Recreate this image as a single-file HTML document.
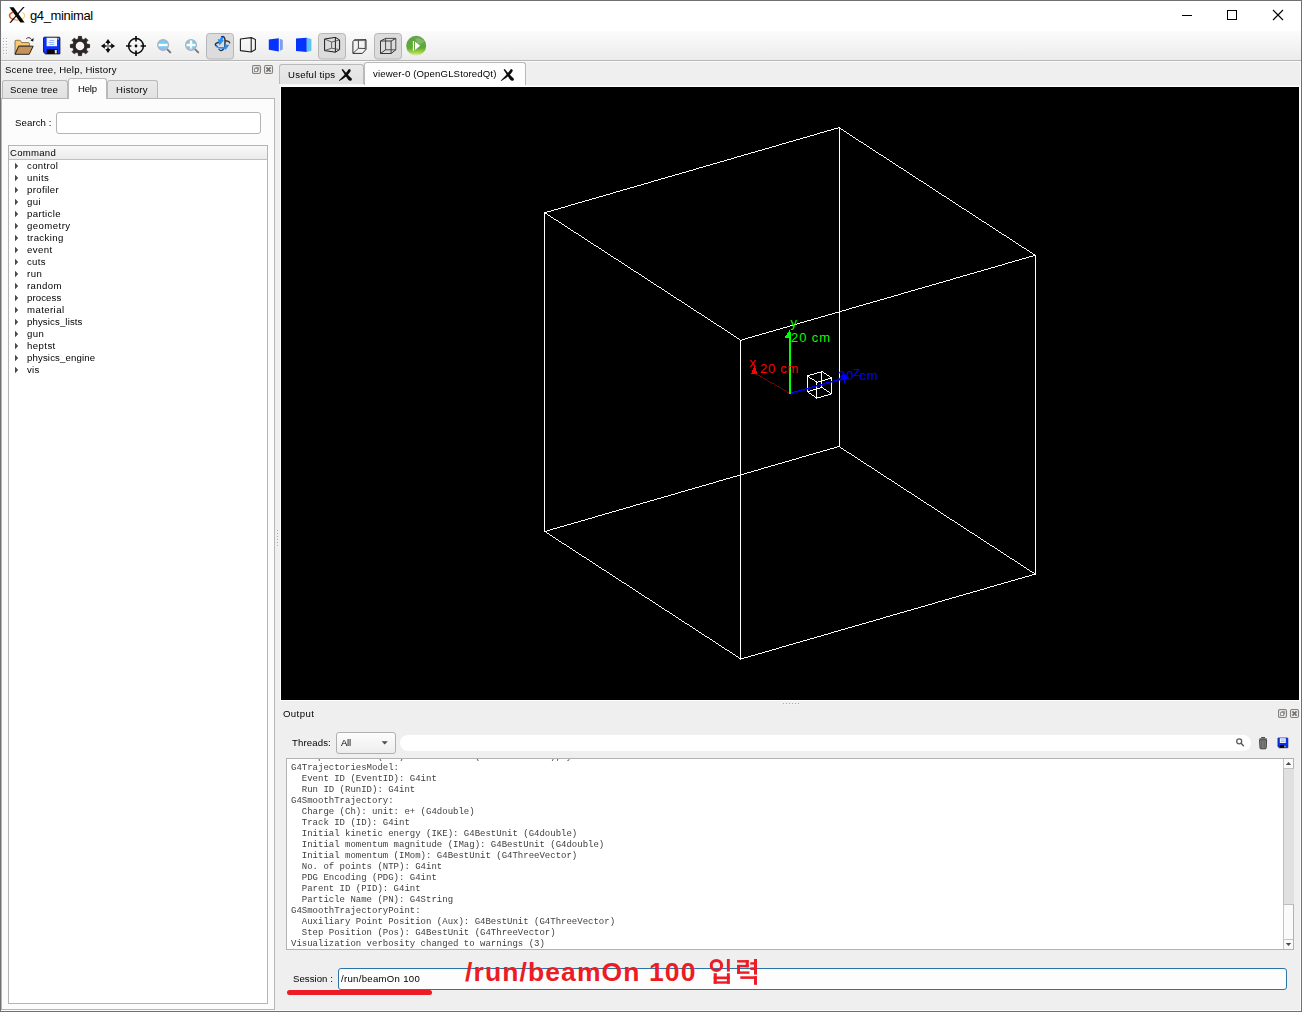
<!DOCTYPE html>
<html>
<head>
<meta charset="utf-8">
<title>g4_minimal</title>
<style>
*{box-sizing:border-box;margin:0;padding:0}
html,body{width:1302px;height:1012px;overflow:hidden;background:#efefef;font-family:"Liberation Sans",sans-serif;color:#1a1a1a}
.abs{position:absolute}
#win{position:absolute;left:0;top:0;width:1302px;height:1012px;background:#efefef;overflow:hidden}
#titlebar{left:1px;top:1px;width:1300px;height:30px;background:#fff}
#title{left:30px;top:8px;font-size:13px;line-height:16px;color:#000;white-space:nowrap;letter-spacing:-0.36px}
#toolbar{left:1px;top:31px;width:1300px;height:29px;background:linear-gradient(#fbfbfb,#ececec)}
#tbline{left:1px;top:60px;width:1300px;height:1px;background:#b6b6b6}
.t{position:absolute;white-space:nowrap;font-size:9.6px;line-height:13px;color:#000;will-change:opacity}
.tab{position:absolute;border:1px solid #b9b9b9;border-bottom:none;border-radius:3px 3px 0 0;background:linear-gradient(#e9e9e9,#e2e2e2)}
.tab.sel{background:#fbfbfb}
.pressed{position:absolute;border:1px solid #b4b4b4;border-radius:3px;background:#dcdcdc}
#viewer{left:281px;top:87px;width:1018px;height:613px;background:#000}
.mono{font-family:"Liberation Mono",monospace}
</style>
</head>
<body>
<div id="win">
<!-- TITLEBAR -->
<div id="titlebar" class="abs"></div>
<div id="title" class="abs">g4_minimal</div>
<!-- TOOLBAR -->
<div id="toolbar" class="abs"></div>
<div id="tbline" class="abs"></div>
<!-- TOOLBAR ICONS -->
<svg class="abs" style="left:0;top:31px" width="440" height="30" viewBox="0 31 440 30">
<!-- handle dots -->
<g shape-rendering="crispEdges"><g fill="#fdfdfd"><rect x="4" y="39" width="1" height="1"/><rect x="4" y="42" width="1" height="1"/><rect x="4" y="45" width="1" height="1"/><rect x="4" y="48" width="1" height="1"/><rect x="4" y="51" width="1" height="1"/><rect x="4" y="54" width="1" height="1"/><rect x="7" y="39" width="1" height="1"/><rect x="7" y="42" width="1" height="1"/><rect x="7" y="45" width="1" height="1"/><rect x="7" y="48" width="1" height="1"/><rect x="7" y="51" width="1" height="1"/><rect x="7" y="54" width="1" height="1"/></g><g fill="#b4b4b4"><rect x="3" y="38" width="1" height="1"/><rect x="3" y="41" width="1" height="1"/><rect x="3" y="44" width="1" height="1"/><rect x="3" y="47" width="1" height="1"/><rect x="3" y="50" width="1" height="1"/><rect x="3" y="53" width="1" height="1"/><rect x="6" y="38" width="1" height="1"/><rect x="6" y="41" width="1" height="1"/><rect x="6" y="44" width="1" height="1"/><rect x="6" y="47" width="1" height="1"/><rect x="6" y="50" width="1" height="1"/><rect x="6" y="53" width="1" height="1"/></g></g>
<!-- pressed buttons -->
<rect x="206.5" y="33.5" width="27" height="25.5" rx="3" fill="#dcdcdc" stroke="#b6b6b6"/>
<rect x="318.5" y="33.5" width="27" height="25.5" rx="3" fill="#dcdcdc" stroke="#b6b6b6"/>
<rect x="374.5" y="33.5" width="27" height="25.5" rx="3" fill="#dcdcdc" stroke="#b6b6b6"/>
<!-- folder -->
<path d="M15 41.2 Q15 40.3 16 40.3 L19.6 40.3 Q20.4 40.3 20.8 41 L21.6 42.6 L28.6 42.6 Q29.4 42.6 29.4 43.4 L29.4 46 L18.6 46 L15 53.8 Z" fill="#fbc96d" stroke="#5a4a30" stroke-width="0.7"/>
<path d="M18.8 46.2 L33.2 46.2 L29.2 54.3 L15 54.3 Z" fill="#c4935a" stroke="#2a2622" stroke-width="1" stroke-linejoin="round"/>
<path d="M26.2 38.8 Q29.2 36 31.6 39.6" fill="none" stroke="#222" stroke-width="0.9"/>
<path d="M33.6 38 L33.2 41.6 L30.4 40.4 Z" fill="#111"/>
<!-- floppy -->
<path d="M44.4 37.2 L59.2 37.2 Q59.9 37.2 59.9 37.9 L59.9 53.9 L45.4 53.9 L43.6 52.2 L43.6 38 Q43.6 37.2 44.4 37.2 Z" fill="#0a35ff" stroke="#10101e" stroke-width="0.9"/>
<rect x="46.6" y="37.8" width="10.4" height="8.4" fill="#f2f4fb"/>
<rect x="49.5" y="40" width="4.6" height="0.9" fill="#8fb0ff"/><rect x="48.6" y="42" width="5.6" height="0.9" fill="#8fb0ff"/><rect x="49.5" y="44" width="4.6" height="0.9" fill="#8fb0ff"/>
<rect x="46.8" y="49.2" width="10.8" height="4.8" fill="#050505"/>
<rect x="54.8" y="50" width="2" height="3.4" fill="#e8e8e8"/>
<rect x="57.6" y="38" width="1" height="1.6" fill="#dfe6ff"/>
<!-- gear -->
<path d="M78.32 38.90 L78.45 36.42 L81.55 36.42 L81.68 38.90 L83.84 39.79 L85.68 38.14 L87.86 40.32 L86.21 42.16 L87.10 44.32 L89.58 44.45 L89.58 47.55 L87.10 47.68 L86.21 49.84 L87.86 51.68 L85.68 53.86 L83.84 52.21 L81.68 53.10 L81.55 55.58 L78.45 55.58 L78.32 53.10 L76.16 52.21 L74.32 53.86 L72.14 51.68 L73.79 49.84 L72.90 47.68 L70.42 47.55 L70.42 44.45 L72.90 44.32 L73.79 42.16 L72.14 40.32 L74.32 38.14 L76.16 39.79Z" fill="#2a2522" stroke="#2a2522" stroke-width="0.9" stroke-linejoin="round"/>
<circle cx="80" cy="46" r="4.3" fill="#f4f4f4"/>
<!-- move -->
<g fill="#0a0a0a">
<path d="M108 38.9 L110.7 42.9 L105.3 42.9 Z"/><path d="M108 53.1 L110.7 49.1 L105.3 49.1 Z"/>
<path d="M100.9 46 L104.9 43.3 L104.9 48.7 Z"/><path d="M115.1 46 L111.1 43.3 L111.1 48.7 Z"/>
<path d="M108 42.9 L108 44.6 M108 49.1 L108 47.4 M104.9 46 L106.6 46 M111.1 46 L109.4 46" stroke="#0a0a0a" stroke-width="1.6"/>
<circle cx="108" cy="46" r="0.8"/>
</g>
<!-- crosshair -->
<circle cx="136" cy="46" r="7.4" fill="none" stroke="#0a0a0a" stroke-width="1.5"/>
<path d="M136 36 L136 41.4 M136 50.6 L136 56 M126 46 L131.4 46 M140.6 46 L146 46" stroke="#0a0a0a" stroke-width="1.7"/>
<circle cx="136" cy="46" r="1.4" fill="#0a0a0a"/>
<!-- zoom out -->
<path d="M167.3 49.4 L170.3 52.4" stroke="#777" stroke-width="2" stroke-linecap="round"/>
<circle cx="163.1" cy="45" r="5.4" fill="#74cdf5" stroke="#b2b2b2" stroke-width="1.3"/>
<rect x="158.6" y="43.8" width="9" height="2.4" fill="#fff"/>
<path d="M158.6 47.6 A5 5 0 0 0 167.6 47.6 Z" fill="#9db4ea" opacity="0.55"/>
<!-- zoom in -->
<path d="M195.2 49.4 L198.2 52.4" stroke="#777" stroke-width="2" stroke-linecap="round"/>
<circle cx="191" cy="45" r="5.4" fill="#74cdf5" stroke="#b2b2b2" stroke-width="1.3"/>
<rect x="186.5" y="43.8" width="9" height="2.4" fill="#fff"/><rect x="189.8" y="40.5" width="2.4" height="9" fill="#fff"/>
<path d="M186.5 47.6 A5 5 0 0 0 195.5 47.6 Z" fill="#9db4ea" opacity="0.45"/>
<!-- rotate -->
<g fill="none" stroke="#333" stroke-linecap="round">
<path d="M222.9 36.5 Q225.4 37.2 225 42.5 L224.7 46.4" stroke-width="1.5"/>
<path d="M224.4 47.4 Q223 50.7 220.8 50.6 Q219.5 50.4 219 49.3" stroke-width="1.2"/>
<path d="M219.2 42.3 Q215.3 43 215.3 44.7 Q215.5 45.9 217 46.3" stroke-width="1.4"/>
<path d="M225.6 40.7 Q229.7 41.3 229.6 42.9" stroke-width="1.4"/>
</g>
<path d="M221.4 36.2 L223.7 36.5 L222.5 40 L223.9 40.2 L219.5 45.4 L217.7 39.1 L219.7 39.6 Z" fill="#1e90ff"/>
<path d="M221.4 36.1 L223.8 36.4 L223.5 37.2 L221.2 36.9 Z" fill="#00108f"/>
<path d="M215.8 45.9 Q220 47.6 224.7 46.9 L224.3 44.2 L229.2 45 L225.4 50.2 L225.1 48.5 Q219.6 49.4 215.8 46.9 Z" fill="#1e90ff"/>
<!-- perspective hollow -->
<path d="M240.4 39 L251.2 37.6 L255.4 39.6 L255.4 49.6 L251.2 52 L240.4 50.6 Z M251.2 37.6 L251.2 52" fill="none" stroke="#1e1e1e" stroke-width="1.1" stroke-linejoin="round"/>
<!-- solid blue 1 -->
<path d="M268.8 39.4 L278.8 38.2 L278.8 51.4 L268.8 49.8 Z" fill="#0433ff"/>
<path d="M279.8 38.8 L282.8 40 L282.8 49.6 L279.8 50.8 Z" fill="#7f9ee9"/>
<!-- solid blue 2 -->
<path d="M296 38.6 L306.8 37.8 L306.8 52 L296 51 Z" fill="#0433ff"/>
<path d="M306.8 37.8 L311.4 39 L311.4 50.8 L306.8 52 Z" fill="#5cc3f2"/>
<!-- wire perspective (pressed) -->
<g fill="none" stroke="#1c1c1c" stroke-width="1" stroke-linejoin="round">
<path d="M324.6 39 L335.4 37.4 L339.6 40 L339.6 49.6 L335.4 52.2 L324.6 50.6 Z"/>
<path d="M335.4 37.4 L335.4 52.2"/>
<path d="M331.6 42 L331.6 48.2 M324.6 39 L331.6 42 L339.6 40 M324.6 50.6 L331.6 48.2 L339.6 49.6" stroke="#444" stroke-width="0.8"/>
</g>
<!-- cube hidden-line -->
<g fill="none" stroke="#2e2e2e" stroke-width="1" stroke-linejoin="round">
<path d="M354 40.3 L366 40.3" stroke="#8a8a8a" stroke-width="1.6"/>
<path d="M365.2 40.5 L365.2 49.5" stroke="#9a9a9a" stroke-width="1.4"/>
<path d="M352.9 41.6 L354.4 39.9 L366 39.7 L366 49.4 L362.4 53.4 L352.9 53.4 Z"/>
<path d="M358.4 40.5 L358.4 48.3 L365 48.5 M358.4 48.3 L353 53.3" stroke="#333" stroke-width="0.9"/>
</g>
<!-- wire cube (pressed) -->
<g fill="none" stroke="#383838" stroke-width="1" stroke-linejoin="round">
<rect x="380.5" y="41" width="10.6" height="12.5"/>
<rect x="385.6" y="38.4" width="10.2" height="11.4" stroke="#4a4a4a"/>
<path d="M380.5 41 L385.6 38.4 M391.1 41 L395.8 38.4 M380.5 53.5 L385.6 49.8 M391.1 53.5 L395.8 49.8"/>
</g>
<!-- play -->
<defs><linearGradient id="pg" x1="0" y1="0" x2="0" y2="1"><stop offset="0" stop-color="#64a34a"/><stop offset="0.6" stop-color="#5cab34"/><stop offset="0.82" stop-color="#a6cf4a"/><stop offset="1" stop-color="#e3efc0"/></linearGradient></defs>
<circle cx="416.2" cy="45.8" r="10" fill="url(#pg)"/>
<path d="M415 38.5 Q420 36.5 424.6 41.6 Q421.5 45 418 43.6 Z" fill="#fff" opacity="0.2"/>
<rect x="412.9" y="41" width="1.1" height="9.6" fill="#fff"/>
<path d="M415 41.6 L420.2 45.8 L415 50 Z" fill="#fff"/>
</svg>
<!-- title icon -->
<svg class="abs" style="left:8px;top:6px" width="19" height="19" viewBox="8 6 19 19">
<path d="M12.9 12.1 Q9.2 13.6 9.5 16 Q9.8 18.2 12.9 19.5" fill="none" stroke="#e9531b" stroke-width="1.5"/>
<path d="M12.9 19.5 Q16.8 20.9 21.4 19.3" fill="none" stroke="#e38b3c" stroke-width="1"/>
<path d="M22.3 12.6 Q25 14 24.7 16 Q24.4 18 21.4 19.3" fill="none" stroke="#f7cd85" stroke-width="1.1"/>
<path d="M9.4 7.3 L13.6 7.3 L24.6 22.6 L20.4 22.6 Z" fill="#050505"/>
<path d="M23 7.1 L24.6 7.1 L11 22.8 L9.4 22.8 Z" fill="#0a0a0a"/>
</svg>
<!-- window controls -->
<svg class="abs" style="left:1175px;top:5px" width="115" height="20" viewBox="1175 5 115 20">
<path d="M1182 15.5 L1192 15.5" stroke="#000" stroke-width="1"/>
<rect x="1227.5" y="10.5" width="9" height="9" fill="none" stroke="#000" stroke-width="1"/>
<path d="M1273 10 L1283 20 M1283 10 L1273 20" stroke="#000" stroke-width="1.1"/>
</svg>
<!-- LEFTDOCK -->
<div class="t" id="dtitle" style="left:5px;top:63px;letter-spacing:0.20px">Scene tree, Help, History</div>
<!-- float / close buttons -->
<svg class="abs" style="left:252px;top:65px" width="23" height="11" viewBox="0 0 23 11">
<rect x="0.5" y="0.5" width="8" height="8" rx="1.6" fill="#e6e6e6" stroke="#85817e" stroke-width="1.1"/>
<rect x="2.6" y="3.6" width="3" height="3" fill="#fafafa" stroke="#8a8683" stroke-width="0.9"/>
<path d="M3.4 2.4 L6.6 2.4 L6.6 5.6" fill="none" stroke="#8a8683" stroke-width="0.9"/>
<rect x="12.5" y="0.5" width="8" height="8" rx="1.6" fill="#ececec" stroke="#85817e" stroke-width="1.1"/>
<path d="M14.4 2.4 L18.6 6.6 M18.6 2.4 L14.4 6.6" stroke="#75716e" stroke-width="1.7"/>
</svg>
<!-- pane -->
<div class="abs" style="left:1px;top:98px;width:274px;height:912px;background:#fcfcfc;border:1px solid #b6b6b6"></div>
<div class="tab" style="left:2px;top:80px;width:66px;height:18px"></div>
<div class="tab" style="left:107px;top:80px;width:51px;height:18px"></div>
<div class="tab sel" style="left:68px;top:78px;width:39px;height:21px;background:#fcfcfc"></div>
<div class="t" id="tab1" style="left:10px;top:83px;letter-spacing:0.17px">Scene tree</div>
<div class="t" id="tab2" style="left:78px;top:82px;font-size:9.5px;letter-spacing:-0.16px">Help</div>
<div class="t" id="tab3" style="left:116px;top:83px;letter-spacing:0.29px">History</div>
<div class="t" id="search" style="left:15px;top:116px;letter-spacing:0.11px">Search :</div>
<div class="abs" style="left:56px;top:112px;width:205px;height:22px;background:#fff;border:1px solid #b4b4b4;border-radius:3px"></div>
<!-- tree -->
<div class="abs" style="left:8px;top:145px;width:260px;height:859px;background:#fff;border:1px solid #b4b4b4"></div>
<div class="abs" style="left:9px;top:146px;width:258px;height:14px;background:linear-gradient(#f9f9f9,#ebebeb);border-bottom:1px solid #c0c0c0"></div>
<div class="t" id="cmd" style="left:10px;top:146px;letter-spacing:0.25px">Command</div>
<svg class="abs" style="left:14px;top:162px" width="5" height="8" viewBox="0 0 5 8"><path d="M1 0.8 L4.2 4 L1 7.2 Z" fill="#484848"/></svg><div class="t ti" style="left:27px;top:159px;letter-spacing:0.33px">control</div><svg class="abs" style="left:14px;top:174px" width="5" height="8" viewBox="0 0 5 8"><path d="M1 0.8 L4.2 4 L1 7.2 Z" fill="#484848"/></svg><div class="t ti" style="left:27px;top:171px;letter-spacing:0.38px">units</div><svg class="abs" style="left:14px;top:186px" width="5" height="8" viewBox="0 0 5 8"><path d="M1 0.8 L4.2 4 L1 7.2 Z" fill="#484848"/></svg><div class="t ti" style="left:27px;top:183px;letter-spacing:0.34px">profiler</div><svg class="abs" style="left:14px;top:198px" width="5" height="8" viewBox="0 0 5 8"><path d="M1 0.8 L4.2 4 L1 7.2 Z" fill="#484848"/></svg><div class="t ti" style="left:27px;top:195px;letter-spacing:0.40px">gui</div><svg class="abs" style="left:14px;top:210px" width="5" height="8" viewBox="0 0 5 8"><path d="M1 0.8 L4.2 4 L1 7.2 Z" fill="#484848"/></svg><div class="t ti" style="left:27px;top:207px;letter-spacing:0.37px">particle</div><svg class="abs" style="left:14px;top:222px" width="5" height="8" viewBox="0 0 5 8"><path d="M1 0.8 L4.2 4 L1 7.2 Z" fill="#484848"/></svg><div class="t ti" style="left:27px;top:219px;letter-spacing:0.44px">geometry</div><svg class="abs" style="left:14px;top:234px" width="5" height="8" viewBox="0 0 5 8"><path d="M1 0.8 L4.2 4 L1 7.2 Z" fill="#484848"/></svg><div class="t ti" style="left:27px;top:231px;letter-spacing:0.39px">tracking</div><svg class="abs" style="left:14px;top:246px" width="5" height="8" viewBox="0 0 5 8"><path d="M1 0.8 L4.2 4 L1 7.2 Z" fill="#484848"/></svg><div class="t ti" style="left:27px;top:243px;letter-spacing:0.43px">event</div><svg class="abs" style="left:14px;top:258px" width="5" height="8" viewBox="0 0 5 8"><path d="M1 0.8 L4.2 4 L1 7.2 Z" fill="#484848"/></svg><div class="t ti" style="left:27px;top:255px;letter-spacing:0.32px">cuts</div><svg class="abs" style="left:14px;top:270px" width="5" height="8" viewBox="0 0 5 8"><path d="M1 0.8 L4.2 4 L1 7.2 Z" fill="#484848"/></svg><div class="t ti" style="left:27px;top:267px;letter-spacing:0.45px">run</div><svg class="abs" style="left:14px;top:282px" width="5" height="8" viewBox="0 0 5 8"><path d="M1 0.8 L4.2 4 L1 7.2 Z" fill="#484848"/></svg><div class="t ti" style="left:27px;top:279px;letter-spacing:0.38px">random</div><svg class="abs" style="left:14px;top:294px" width="5" height="8" viewBox="0 0 5 8"><path d="M1 0.8 L4.2 4 L1 7.2 Z" fill="#484848"/></svg><div class="t ti" style="left:27px;top:291px;letter-spacing:0.11px">process</div><svg class="abs" style="left:14px;top:306px" width="5" height="8" viewBox="0 0 5 8"><path d="M1 0.8 L4.2 4 L1 7.2 Z" fill="#484848"/></svg><div class="t ti" style="left:27px;top:303px;letter-spacing:0.42px">material</div><svg class="abs" style="left:14px;top:318px" width="5" height="8" viewBox="0 0 5 8"><path d="M1 0.8 L4.2 4 L1 7.2 Z" fill="#484848"/></svg><div class="t ti" style="left:27px;top:315px;letter-spacing:0.13px">physics_lists</div><svg class="abs" style="left:14px;top:330px" width="5" height="8" viewBox="0 0 5 8"><path d="M1 0.8 L4.2 4 L1 7.2 Z" fill="#484848"/></svg><div class="t ti" style="left:27px;top:327px;letter-spacing:0.39px">gun</div><svg class="abs" style="left:14px;top:342px" width="5" height="8" viewBox="0 0 5 8"><path d="M1 0.8 L4.2 4 L1 7.2 Z" fill="#484848"/></svg><div class="t ti" style="left:27px;top:339px;letter-spacing:0.43px">heptst</div><svg class="abs" style="left:14px;top:354px" width="5" height="8" viewBox="0 0 5 8"><path d="M1 0.8 L4.2 4 L1 7.2 Z" fill="#484848"/></svg><div class="t ti" style="left:27px;top:351px;letter-spacing:0.15px">physics_engine</div><svg class="abs" style="left:14px;top:366px" width="5" height="8" viewBox="0 0 5 8"><path d="M1 0.8 L4.2 4 L1 7.2 Z" fill="#484848"/></svg><div class="t ti" style="left:27px;top:363px;letter-spacing:0.27px">vis</div>
<!-- CENTER -->
<div class="abs" style="left:279px;top:84px;width:86px;height:2px;background:#f6f6f6"></div>
<div class="abs" style="left:280px;top:85px;width:1021px;height:1px;background:#f6f6f6"></div>
<div class="abs" style="left:280px;top:86px;width:1021px;height:615px;background:#fff"></div>
<div class="tab" style="left:279px;top:64px;width:85px;height:20px"></div>
<div class="tab sel" style="left:364px;top:62px;width:162px;height:23px;background:#fdfdfd"></div><div class="abs" style="left:365px;top:84px;width:160px;height:3px;background:#fdfdfd"></div>
<div class="t" id="ctab1" style="left:288px;top:68px;letter-spacing:0.22px">Useful tips</div>
<div class="t" id="ctab2" style="left:373px;top:67px;letter-spacing:0.14px">viewer-0 (OpenGLStoredQt)</div>
<svg class="abs" style="left:337px;top:67px" width="17" height="16" viewBox="337 67 17 16"><g><path d="M348.9 68.9 Q350.9 68.8 350.7 70.9 Q347.6 76.6 339.2 81.1 Q338.5 80.6 339.3 79.9 Q344.6 75.4 348.9 68.9 Z" fill="#0c0c0c"/><path d="M341.6 69.7 L342.8 68.9 Q346.6 74 351.7 78.4 Q352.5 80.1 350.8 80.8 Q349.1 81 348.2 79.8 Q345 75 341.6 69.7 Z" fill="#0c0c0c"/></g></svg>
<svg class="abs" style="left:499px;top:67px" width="17" height="16" viewBox="498.8 67 17 16"><g transform="translate(161.8 0)"><path d="M348.9 68.9 Q350.9 68.8 350.7 70.9 Q347.6 76.6 339.2 81.1 Q338.5 80.6 339.3 79.9 Q344.6 75.4 348.9 68.9 Z" fill="#0c0c0c"/><path d="M341.6 69.7 L342.8 68.9 Q346.6 74 351.7 78.4 Q352.5 80.1 350.8 80.8 Q349.1 81 348.2 79.8 Q345 75 341.6 69.7 Z" fill="#0c0c0c"/></g></svg>
<div id="viewer" class="abs"></div>
<svg class="abs" id="gl" style="left:281px;top:87px" width="1018" height="613" viewBox="0 0 1018 613">
<g stroke="#fff" stroke-width="1" shape-rendering="crispEdges" fill="none"><path d="M263 125.5h3M266 124.5h4M270 123.5h3M273 122.5h4M277 121.5h3M280 120.5h4M284 119.5h3M287 118.5h3M290 117.5h4M294 116.5h3M297 115.5h4M301 114.5h3M304 113.5h4M308 112.5h3M311 111.5h4M315 110.5h3M318 109.5h4M322 108.5h3M325 107.5h4M329 106.5h3M332 105.5h3M335 104.5h4M339 103.5h3M342 102.5h4M346 101.5h3M349 100.5h4M353 99.5h3M356 98.5h4M360 97.5h3M363 96.5h4M367 95.5h3M370 94.5h3M373 93.5h4M377 92.5h3M380 91.5h4M384 90.5h3M387 89.5h4M391 88.5h3M394 87.5h4M398 86.5h3M401 85.5h4M405 84.5h3M408 83.5h4M412 82.5h3M415 81.5h3M418 80.5h4M422 79.5h3M425 78.5h4M429 77.5h3M432 76.5h4M436 75.5h3M439 74.5h4M443 73.5h3M446 72.5h4M450 71.5h3M453 70.5h3M456 69.5h4M460 68.5h3M463 67.5h4M467 66.5h3M470 65.5h4M474 64.5h3M477 63.5h4M481 62.5h3M484 61.5h4M488 60.5h3M491 59.5h4M495 58.5h3M498 57.5h3M501 56.5h4M505 55.5h3M508 54.5h4M512 53.5h3M515 52.5h4M519 51.5h3M522 50.5h4M526 49.5h3M529 48.5h4M533 47.5h3M536 46.5h3M539 45.5h4M543 44.5h3M546 43.5h4M550 42.5h3M553 41.5h4M557 40.5h2M558 41.5h2M560 42.5h2M562 43.5h1M563 44.5h2M565 45.5h1M566 46.5h2M568 47.5h1M569 48.5h2M571 49.5h1M572 50.5h2M574 51.5h1M575 52.5h2M577 53.5h1M578 54.5h2M580 55.5h2M582 56.5h1M583 57.5h2M585 58.5h1M586 59.5h2M588 60.5h1M589 61.5h2M591 62.5h1M592 63.5h2M594 64.5h1M595 65.5h2M597 66.5h1M598 67.5h2M600 68.5h2M602 69.5h1M603 70.5h2M605 71.5h1M606 72.5h2M608 73.5h1M609 74.5h2M611 75.5h1M612 76.5h2M614 77.5h1M615 78.5h2M617 79.5h1M618 80.5h2M620 81.5h2M622 82.5h1M623 83.5h2M625 84.5h1M626 85.5h2M628 86.5h1M629 87.5h2M631 88.5h1M632 89.5h2M634 90.5h1M635 91.5h2M637 92.5h1M638 93.5h2M640 94.5h2M642 95.5h1M643 96.5h2M645 97.5h1M646 98.5h2M648 99.5h1M649 100.5h2M651 101.5h1M652 102.5h2M654 103.5h1M655 104.5h2M657 105.5h1M658 106.5h2M660 107.5h1M661 108.5h2M663 109.5h2M665 110.5h1M666 111.5h2M668 112.5h1M669 113.5h2M671 114.5h1M672 115.5h2M674 116.5h1M675 117.5h2M677 118.5h1M678 119.5h2M680 120.5h1M681 121.5h2M683 122.5h2M685 123.5h1M686 124.5h2M688 125.5h1M689 126.5h2M691 127.5h1M692 128.5h2M694 129.5h1M695 130.5h2M697 131.5h1M698 132.5h2M700 133.5h1M701 134.5h2M703 135.5h2M705 136.5h1M706 137.5h2M708 138.5h1M709 139.5h2M711 140.5h1M712 141.5h2M714 142.5h1M715 143.5h2M717 144.5h1M718 145.5h2M720 146.5h1M721 147.5h2M723 148.5h2M725 149.5h1M726 150.5h2M728 151.5h1M729 152.5h2M731 153.5h1M732 154.5h2M734 155.5h1M735 156.5h2M737 157.5h1M738 158.5h2M740 159.5h1M741 160.5h2M743 161.5h2M745 162.5h1M746 163.5h2M748 164.5h1M749 165.5h2M751 166.5h1M752 167.5h2M754 168.5h1M263 125.5h1M264 126.5h2M266 127.5h1M267 128.5h2M269 129.5h1M270 130.5h2M272 131.5h1M273 132.5h2M275 133.5h2M277 134.5h1M278 135.5h2M280 136.5h1M281 137.5h2M283 138.5h1M284 139.5h2M286 140.5h1M287 141.5h2M289 142.5h1M290 143.5h2M292 144.5h1M293 145.5h2M295 146.5h2M297 147.5h1M298 148.5h2M300 149.5h1M301 150.5h2M303 151.5h1M304 152.5h2M306 153.5h1M307 154.5h2M309 155.5h1M310 156.5h2M312 157.5h1M313 158.5h2M315 159.5h2M317 160.5h1M318 161.5h2M320 162.5h1M321 163.5h2M323 164.5h1M324 165.5h2M326 166.5h1M327 167.5h2M329 168.5h1M330 169.5h2M332 170.5h1M333 171.5h2M335 172.5h2M337 173.5h1M338 174.5h2M340 175.5h1M341 176.5h2M343 177.5h1M344 178.5h2M346 179.5h1M347 180.5h2M349 181.5h1M350 182.5h2M352 183.5h1M353 184.5h2M355 185.5h2M357 186.5h1M358 187.5h2M360 188.5h1M361 189.5h2M363 190.5h1M364 191.5h2M366 192.5h1M367 193.5h2M369 194.5h1M370 195.5h2M372 196.5h1M373 197.5h2M375 198.5h1M376 199.5h2M378 200.5h2M380 201.5h1M381 202.5h2M383 203.5h1M384 204.5h2M386 205.5h1M387 206.5h2M389 207.5h1M390 208.5h2M392 209.5h1M393 210.5h2M395 211.5h1M396 212.5h2M398 213.5h2M400 214.5h1M401 215.5h2M403 216.5h1M404 217.5h2M406 218.5h1M407 219.5h2M409 220.5h1M410 221.5h2M412 222.5h1M413 223.5h2M415 224.5h1M416 225.5h2M418 226.5h2M420 227.5h1M421 228.5h2M423 229.5h1M424 230.5h2M426 231.5h1M427 232.5h2M429 233.5h1M430 234.5h2M432 235.5h1M433 236.5h2M435 237.5h1M436 238.5h2M438 239.5h2M440 240.5h1M441 241.5h2M443 242.5h1M444 243.5h2M446 244.5h1M447 245.5h2M449 246.5h1M450 247.5h2M452 248.5h1M453 249.5h2M455 250.5h1M456 251.5h2M458 252.5h1M459 253.5h1M459 253.5h2M461 252.5h3M464 251.5h3M467 250.5h4M471 249.5h3M474 248.5h4M478 247.5h3M481 246.5h4M485 245.5h3M488 244.5h4M492 243.5h3M495 242.5h4M499 241.5h3M502 240.5h4M506 239.5h3M509 238.5h4M513 237.5h3M516 236.5h3M519 235.5h4M523 234.5h3M526 233.5h4M530 232.5h3M533 231.5h4M537 230.5h3M540 229.5h4M544 228.5h3M547 227.5h4M551 226.5h3M554 225.5h4M558 224.5h3M561 223.5h4M565 222.5h3M568 221.5h3M571 220.5h4M575 219.5h3M578 218.5h4M582 217.5h3M585 216.5h4M589 215.5h3M592 214.5h4M596 213.5h3M599 212.5h4M603 211.5h3M606 210.5h4M610 209.5h3M613 208.5h4M617 207.5h3M620 206.5h3M623 205.5h4M627 204.5h3M630 203.5h4M634 202.5h3M637 201.5h4M641 200.5h3M644 199.5h4M648 198.5h3M651 197.5h4M655 196.5h3M658 195.5h4M662 194.5h3M665 193.5h4M669 192.5h3M672 191.5h3M675 190.5h4M679 189.5h3M682 188.5h4M686 187.5h3M689 186.5h4M693 185.5h3M696 184.5h4M700 183.5h3M703 182.5h4M707 181.5h3M710 180.5h4M714 179.5h3M717 178.5h4M721 177.5h3M724 176.5h3M727 175.5h4M731 174.5h3M734 173.5h4M738 172.5h3M741 171.5h4M745 170.5h3M748 169.5h4M752 168.5h3M263 444.5h3M266 443.5h3M269 442.5h3M272 441.5h4M276 440.5h3M279 439.5h4M283 438.5h3M286 437.5h4M290 436.5h3M293 435.5h4M297 434.5h3M300 433.5h4M304 432.5h3M307 431.5h4M311 430.5h3M314 429.5h3M317 428.5h4M321 427.5h3M324 426.5h4M328 425.5h3M331 424.5h4M335 423.5h3M338 422.5h4M342 421.5h3M345 420.5h4M349 419.5h3M352 418.5h3M355 417.5h4M359 416.5h3M362 415.5h4M366 414.5h3M369 413.5h4M373 412.5h3M376 411.5h4M380 410.5h3M383 409.5h4M387 408.5h3M390 407.5h4M394 406.5h3M397 405.5h3M400 404.5h4M404 403.5h3M407 402.5h4M411 401.5h3M414 400.5h4M418 399.5h3M421 398.5h4M425 397.5h3M428 396.5h4M432 395.5h3M435 394.5h3M438 393.5h4M442 392.5h3M445 391.5h4M449 390.5h3M452 389.5h4M456 388.5h3M459 387.5h4M463 386.5h3M466 385.5h4M470 384.5h3M473 383.5h4M477 382.5h3M480 381.5h3M483 380.5h4M487 379.5h3M490 378.5h4M494 377.5h3M497 376.5h4M501 375.5h3M504 374.5h4M508 373.5h3M511 372.5h4M515 371.5h3M518 370.5h3M521 369.5h4M525 368.5h3M528 367.5h4M532 366.5h3M535 365.5h4M539 364.5h3M542 363.5h4M546 362.5h3M549 361.5h4M553 360.5h3M556 359.5h3M558 359.5h1M559 360.5h1M560 361.5h2M562 362.5h1M563 363.5h2M565 364.5h1M566 365.5h2M568 366.5h2M570 367.5h1M571 368.5h2M573 369.5h1M574 370.5h2M576 371.5h1M577 372.5h2M579 373.5h1M580 374.5h2M582 375.5h1M583 376.5h2M585 377.5h1M586 378.5h2M588 379.5h2M590 380.5h1M591 381.5h2M593 382.5h1M594 383.5h2M596 384.5h1M597 385.5h2M599 386.5h1M600 387.5h2M602 388.5h1M603 389.5h2M605 390.5h1M606 391.5h2M608 392.5h2M610 393.5h1M611 394.5h2M613 395.5h1M614 396.5h2M616 397.5h1M617 398.5h2M619 399.5h1M620 400.5h2M622 401.5h1M623 402.5h2M625 403.5h1M626 404.5h2M628 405.5h2M630 406.5h1M631 407.5h2M633 408.5h1M634 409.5h2M636 410.5h1M637 411.5h2M639 412.5h1M640 413.5h2M642 414.5h1M643 415.5h2M645 416.5h1M646 417.5h2M648 418.5h2M650 419.5h1M651 420.5h2M653 421.5h1M654 422.5h2M656 423.5h1M657 424.5h2M659 425.5h1M660 426.5h2M662 427.5h1M663 428.5h2M665 429.5h1M666 430.5h2M668 431.5h1M669 432.5h2M671 433.5h2M673 434.5h1M674 435.5h2M676 436.5h1M677 437.5h2M679 438.5h1M680 439.5h2M682 440.5h1M683 441.5h2M685 442.5h1M686 443.5h2M688 444.5h1M689 445.5h2M691 446.5h2M693 447.5h1M694 448.5h2M696 449.5h1M697 450.5h2M699 451.5h1M700 452.5h2M702 453.5h1M703 454.5h2M705 455.5h1M706 456.5h2M708 457.5h1M709 458.5h2M711 459.5h2M713 460.5h1M714 461.5h2M716 462.5h1M717 463.5h2M719 464.5h1M720 465.5h2M722 466.5h1M723 467.5h2M725 468.5h1M726 469.5h2M728 470.5h1M729 471.5h2M731 472.5h2M733 473.5h1M734 474.5h2M736 475.5h1M737 476.5h2M739 477.5h1M740 478.5h2M742 479.5h1M743 480.5h2M745 481.5h1M746 482.5h2M748 483.5h1M749 484.5h2M751 485.5h2M753 486.5h1M754 487.5h1M263 444.5h2M265 445.5h1M266 446.5h2M268 447.5h1M269 448.5h2M271 449.5h1M272 450.5h2M274 451.5h1M275 452.5h2M277 453.5h1M278 454.5h2M280 455.5h1M281 456.5h2M283 457.5h2M285 458.5h1M286 459.5h2M288 460.5h1M289 461.5h2M291 462.5h1M292 463.5h2M294 464.5h1M295 465.5h2M297 466.5h1M298 467.5h2M300 468.5h1M301 469.5h2M303 470.5h2M305 471.5h1M306 472.5h2M308 473.5h1M309 474.5h2M311 475.5h1M312 476.5h2M314 477.5h1M315 478.5h2M317 479.5h1M318 480.5h2M320 481.5h1M321 482.5h2M323 483.5h2M325 484.5h1M326 485.5h2M328 486.5h1M329 487.5h2M331 488.5h1M332 489.5h2M334 490.5h1M335 491.5h2M337 492.5h1M338 493.5h2M340 494.5h1M341 495.5h2M343 496.5h2M345 497.5h1M346 498.5h2M348 499.5h1M349 500.5h2M351 501.5h1M352 502.5h2M354 503.5h1M355 504.5h2M357 505.5h1M358 506.5h2M360 507.5h1M361 508.5h2M363 509.5h1M364 510.5h2M366 511.5h2M368 512.5h1M369 513.5h2M371 514.5h1M372 515.5h2M374 516.5h1M375 517.5h2M377 518.5h1M378 519.5h2M380 520.5h1M381 521.5h2M383 522.5h1M384 523.5h2M386 524.5h2M388 525.5h1M389 526.5h2M391 527.5h1M392 528.5h2M394 529.5h1M395 530.5h2M397 531.5h1M398 532.5h2M400 533.5h1M401 534.5h2M403 535.5h1M404 536.5h2M406 537.5h2M408 538.5h1M409 539.5h2M411 540.5h1M412 541.5h2M414 542.5h1M415 543.5h2M417 544.5h1M418 545.5h2M420 546.5h1M421 547.5h2M423 548.5h1M424 549.5h2M426 550.5h2M428 551.5h1M429 552.5h2M431 553.5h1M432 554.5h2M434 555.5h1M435 556.5h2M437 557.5h1M438 558.5h2M440 559.5h1M441 560.5h2M443 561.5h1M444 562.5h2M446 563.5h2M448 564.5h1M449 565.5h2M451 566.5h1M452 567.5h2M454 568.5h1M455 569.5h2M457 570.5h1M458 571.5h2M459 572.5h1M460 571.5h3M463 570.5h4M467 569.5h3M470 568.5h4M474 567.5h3M477 566.5h4M481 565.5h3M484 564.5h4M488 563.5h3M491 562.5h4M495 561.5h3M498 560.5h3M501 559.5h4M505 558.5h3M508 557.5h4M512 556.5h3M515 555.5h4M519 554.5h3M522 553.5h4M526 552.5h3M529 551.5h4M533 550.5h3M536 549.5h4M540 548.5h3M543 547.5h4M547 546.5h3M550 545.5h3M553 544.5h4M557 543.5h3M560 542.5h4M564 541.5h3M567 540.5h4M571 539.5h3M574 538.5h4M578 537.5h3M581 536.5h4M585 535.5h3M588 534.5h4M592 533.5h3M595 532.5h4M599 531.5h3M602 530.5h3M605 529.5h4M609 528.5h3M612 527.5h4M616 526.5h3M619 525.5h4M623 524.5h3M626 523.5h4M630 522.5h3M633 521.5h4M637 520.5h3M640 519.5h4M644 518.5h3M647 517.5h4M651 516.5h3M654 515.5h3M657 514.5h4M661 513.5h3M664 512.5h4M668 511.5h3M671 510.5h4M675 509.5h3M678 508.5h4M682 507.5h3M685 506.5h4M689 505.5h3M692 504.5h4M696 503.5h3M699 502.5h4M703 501.5h3M706 500.5h3M709 499.5h4M713 498.5h3M716 497.5h4M720 496.5h3M723 495.5h4M727 494.5h3M730 493.5h4M734 492.5h3M737 491.5h4M741 490.5h3M744 489.5h4M748 488.5h3M751 487.5h4M558.5 41v319M263.5 125v320M754.5 168v320M459.5 253v319"/><path d="M526 288.5h3M529 287.5h4M533 286.5h3M536 285.5h4M540 284.5h1M540 284.5h2M542 285.5h1M543 286.5h2M545 287.5h1M546 288.5h2M548 289.5h1M549 290.5h2M526 289.5h2M528 290.5h1M529 291.5h2M531 292.5h2M533 293.5h1M534 294.5h2M535 295.5h2M537 294.5h3M540 293.5h4M544 292.5h3M547 291.5h4M526 304.5h3M529 303.5h3M532 302.5h4M536 301.5h3M539 300.5h2M540 300.5h2M542 301.5h1M543 302.5h2M545 303.5h1M546 304.5h2M548 305.5h1M549 306.5h2M526 304.5h1M527 305.5h1M528 306.5h2M530 307.5h1M531 308.5h2M533 309.5h1M534 310.5h2M535 311.5h1M536 310.5h4M540 309.5h3M543 308.5h4M547 307.5h3M550 306.5h1M540.5 284v17M526.5 288v17M550.5 290v17M535.5 295v17"/></g>
<g shape-rendering="crispEdges" fill="none"><path d="M471 285.5h3M474 286.5h1M475 287.5h2M477 288.5h2M479 289.5h2M481 290.5h1M482 291.5h2M484 292.5h2M486 293.5h1M487 294.5h2M489 295.5h2M491 296.5h2M493 297.5h1M494 298.5h2M496 299.5h2M498 300.5h2M500 301.5h1M501 302.5h2M503 303.5h2M505 304.5h1M506 305.5h2M508 306.5h2" stroke="#7f0000" stroke-width="1"/><path d="M509 306.5h1M510 305.5h3M513 304.5h4M517 303.5h3M520 302.5h4M524 301.5h4M528 300.5h3M531 299.5h4M535 298.5h3M538 297.5h4M542 296.5h3M545 295.5h4M549 294.5h3M552 293.5h4M556 292.5h4M560 291.5h3M563 290.5h3" stroke="#0000ff" stroke-width="1"/><path d="M509 307.5h1M510 306.5h3M513 305.5h4M517 304.5h3M520 303.5h4M524 302.5h4M528 301.5h3M531 300.5h4M535 299.5h3M538 298.5h4M542 297.5h3M545 296.5h4M549 295.5h3M552 294.5h4M556 293.5h4M560 292.5h3M563 291.5h3" stroke="#0000ff" stroke-width="1" opacity="0.55"/></g>
<g shape-rendering="crispEdges">
<line x1="509" y1="307" x2="509" y2="245" stroke="#00ff00" stroke-width="2"/>
<path d="M503.5 251 L510.5 251 L508.5 243 Z" fill="#00ff00"/>
<path d="M469.8 287.4 L476.8 286.4 L473.4 278.8 Z" fill="#ff0000"/>
<path d="M559.6 288.6 L563.6 287.4 L568 290.6 L565 291.8 L563.6 296 L562.4 292.4 Z" fill="#0000ff"/>
</g>
<g font-family="Liberation Sans, sans-serif" font-size="13px">
<text x="509.5" y="240" fill="#00ff00" id="gy">y</text>
<text x="510" y="254.8" fill="#00ff00" id="g20" letter-spacing="0.9">20 cm</text>
<text x="468.5" y="279.5" fill="#ff0000" id="rx">x</text>
<text x="479" y="285.8" fill="#ff0000" id="r20" letter-spacing="0.75">20 cm</text>
<text x="557" y="292.8" fill="#0000ff" id="b20" letter-spacing="1.05">20 cm</text>
<text x="572.5" y="288.8" fill="#0000ff" id="bz">z</text>
</g>
</svg>
<!-- OUTPUT -->
<div class="t" id="outt" style="left:283px;top:707px;letter-spacing:0.40px">Output</div>
<svg class="abs" style="left:1278px;top:709px" width="23" height="11" viewBox="0 0 23 11">
<rect x="0.5" y="0.5" width="8" height="8" rx="1.6" fill="#e6e6e6" stroke="#85817e" stroke-width="1.1"/>
<rect x="2.6" y="3.6" width="3" height="3" fill="#fafafa" stroke="#8a8683" stroke-width="0.9"/>
<path d="M3.4 2.4 L6.6 2.4 L6.6 5.6" fill="none" stroke="#8a8683" stroke-width="0.9"/>
<rect x="12.5" y="0.5" width="8" height="8" rx="1.6" fill="#ececec" stroke="#85817e" stroke-width="1.1"/>
<path d="M14.4 2.4 L18.6 6.6 M18.6 2.4 L14.4 6.6" stroke="#75716e" stroke-width="1.7"/>
</svg>
<div class="t" id="thr" style="left:292px;top:736px;letter-spacing:0.13px">Threads:</div>
<div class="abs" style="left:336px;top:732px;width:60px;height:22px;border:1px solid #b0b0b0;border-radius:3px;background:linear-gradient(#fdfdfd,#ededed)"></div>
<div class="t" id="all" style="left:341px;top:736px;font-size:9.5px;letter-spacing:-0.23px">All</div>
<svg class="abs" style="left:380px;top:741px" width="8" height="5" viewBox="0 0 8 5"><path d="M1.6 0.3 L7.8 0.3 L4.7 3.5 Z" fill="#4c4c4c"/></svg>
<div class="abs" style="left:400px;top:735px;width:851px;height:16px;border-radius:8px;background:#fff"></div>
<svg class="abs" style="left:1234px;top:737px" width="12" height="12" viewBox="0 0 12 12"><circle cx="5.2" cy="4.3" r="2.5" fill="none" stroke="#5a5a5a" stroke-width="1.3"/><path d="M7.1 6.3 L9.4 8.7" stroke="#5a5a5a" stroke-width="1.5" stroke-linecap="round"/></svg>
<!-- trash + save small -->
<svg class="abs" style="left:1256px;top:735px" width="36" height="16" viewBox="1256 735 36 16">
<path d="M1261.2 737.6 L1265 737.6 M1259.4 738.9 L1266.8 738.9" stroke="#3a3a3a" stroke-width="1" fill="none"/>
<path d="M1259.6 739.8 L1266.6 739.8 L1266.2 748 Q1266.1 748.8 1265.2 748.8 L1261 748.8 Q1260.1 748.8 1260 748 Z" fill="#8c8c8c" stroke="#2e2e2e" stroke-width="0.9"/>
<path d="M1261.6 740.8 L1261.6 747.8 M1263.1 740.8 L1263.1 747.8 M1264.6 740.8 L1264.6 747.8" stroke="#4a4a4a" stroke-width="0.6"/>
<path d="M1278.4 737.9 L1287.4 737.9 Q1287.9 737.9 1287.9 738.4 L1287.9 747.8 L1279.2 747.8 L1277.9 746.6 L1277.9 738.4 Q1277.9 737.9 1278.4 737.9 Z" fill="#0a32f0" stroke="#0a1560" stroke-width="0.6"/>
<rect x="1279.8" y="738.2" width="6" height="4.8" fill="#eef1fb"/>
<rect x="1281" y="739.6" width="3.6" height="0.8" fill="#8fb0ff"/><rect x="1281" y="741.2" width="3.6" height="0.8" fill="#8fb0ff"/>
<rect x="1279.8" y="745" width="6.4" height="2.9" fill="#050505"/>
<rect x="1284.4" y="745.5" width="1.2" height="2" fill="#e0e0e0"/>
</svg>
<!-- textarea -->
<div class="abs" style="left:286px;top:758px;width:1008px;height:192px;background:#fff;border:1px solid #b2b2b2;overflow:hidden">
<pre class="mono" id="log" style="position:absolute;left:4px;top:-7px;will-change:opacity;font-size:9px;line-height:11px;color:#3e3e3e;white-space:pre">  Step Position (Pos): G4BestUnit (G4ThreeVector), y
G4TrajectoriesModel:
  Event ID (EventID): G4int
  Run ID (RunID): G4int
G4SmoothTrajectory:
  Charge (Ch): unit: e+ (G4double)
  Track ID (ID): G4int
  Initial kinetic energy (IKE): G4BestUnit (G4double)
  Initial momentum magnitude (IMag): G4BestUnit (G4double)
  Initial momentum (IMom): G4BestUnit (G4ThreeVector)
  No. of points (NTP): G4int
  PDG Encoding (PDG): G4int
  Parent ID (PID): G4int
  Particle Name (PN): G4String
G4SmoothTrajectoryPoint:
  Auxiliary Point Position (Aux): G4BestUnit (G4ThreeVector)
  Step Position (Pos): G4BestUnit (G4ThreeVector)
Visualization verbosity changed to warnings (3)</pre>
</div>
<!-- scrollbar -->
<div class="abs" style="left:1283px;top:759px;width:10px;height:190px;background:#fafafa;border-left:1px solid #c4c4c4"></div>
<div class="abs" style="left:1283px;top:768px;width:11px;height:137px;background:#e0e0e0;border:1px solid #bdbdbd;border-right:none"></div>
<div class="abs" style="left:1283px;top:759px;width:10px;height:10px;background:#fafafa;border-left:1px solid #c4c4c4;border-bottom:1px solid #c4c4c4"></div>
<div class="abs" style="left:1283px;top:939px;width:10px;height:10px;background:#fafafa;border-left:1px solid #c4c4c4;border-top:1px solid #c4c4c4"></div>
<svg class="abs" style="left:1285px;top:761px" width="7" height="5" viewBox="0 0 7 5"><path d="M0.8 3.9 L3.5 1 L6.2 3.9 Z" fill="#4a4a4a"/></svg>
<svg class="abs" style="left:1285px;top:942px" width="7" height="5" viewBox="0 0 7 5"><path d="M0.8 1 L3.5 3.9 L6.2 1 Z" fill="#4a4a4a"/></svg>
<!-- session -->
<div class="t" id="sess" style="left:293px;top:972px;letter-spacing:0.05px">Session :</div>
<div class="abs" style="left:338px;top:968px;width:949px;height:22px;background:#fdfdfd;border:1px solid #2b74a8;border-radius:3px"></div>
<div class="t" id="cmdtxt" style="left:341px;top:972px;letter-spacing:0.29px">/run/beamOn 100</div>
<!-- annotation -->
<div class="abs" id="anno" style="left:465px;top:956px;font-size:26.5px;line-height:32px;font-weight:bold;color:#ed1c24;letter-spacing:1.1px;white-space:nowrap">/run/beamOn 100</div>
<svg class="abs" style="left:700px;top:952px" width="70" height="40" viewBox="700 952 70 40">
<g fill="#ed1c24">
<ellipse cx="716.4" cy="965.4" rx="5.2" ry="5" fill="none" stroke="#ed1c24" stroke-width="3"/>
<rect x="726.9" y="959" width="2.9" height="12.6"/>
<rect x="713.7" y="973.2" width="3.1" height="10.5"/>
<rect x="726.9" y="973.2" width="2.9" height="10.5"/>
<rect x="713.7" y="976.5" width="16.1" height="2.7"/>
<rect x="713.7" y="981.3" width="16.1" height="2.4"/>
<rect x="737.1" y="960.1" width="11.6" height="2.4"/>
<rect x="745.7" y="960.1" width="3" height="7.2"/>
<rect x="737.1" y="964.9" width="11.6" height="2.4"/>
<rect x="737.1" y="964.9" width="2.9" height="8.9"/>
<rect x="737.1" y="971.4" width="12.4" height="2.4"/>
<rect x="754" y="959" width="3" height="15.6"/>
<rect x="750.3" y="962.2" width="4" height="2.4"/>
<rect x="750.3" y="967.3" width="4" height="2.7"/>
<rect x="740.3" y="976.3" width="16.7" height="2.6"/>
<rect x="754" y="976.3" width="3" height="8.5"/>
</g></svg>
<svg class="abs" style="left:284px;top:986px" width="152" height="12" viewBox="284 986 152 12"><path d="M289.5 992.5 L429.5 992.5" stroke="#ed1c24" stroke-width="5" stroke-linecap="round"/></svg>
<div class="abs" style="left:1px;top:61px;width:1300px;height:1px;background:#fafafa"></div>
<div class="abs" style="left:1300px;top:61px;width:1px;height:950px;background:#fafafa"></div>
<div class="abs" style="left:1px;top:1010px;width:1300px;height:1px;background:#fafafa"></div>
<svg class="abs" style="left:0;top:0" width="1302" height="1012" viewBox="0 0 1302 1012" shape-rendering="crispEdges"><g fill="#fbfbfb"><rect x="278" y="531" width="1" height="1"/><rect x="278" y="534" width="1" height="1"/><rect x="278" y="537" width="1" height="1"/><rect x="278" y="540" width="1" height="1"/><rect x="278" y="543" width="1" height="1"/><rect x="278" y="546" width="1" height="1"/><rect x="784" y="704" width="1" height="1"/><rect x="787" y="704" width="1" height="1"/><rect x="790" y="704" width="1" height="1"/><rect x="793" y="704" width="1" height="1"/><rect x="796" y="704" width="1" height="1"/><rect x="799" y="704" width="1" height="1"/></g><g fill="#a9a9a9"><rect x="277" y="530" width="1" height="1"/><rect x="277" y="533" width="1" height="1"/><rect x="277" y="536" width="1" height="1"/><rect x="277" y="539" width="1" height="1"/><rect x="277" y="542" width="1" height="1"/><rect x="277" y="545" width="1" height="1"/><rect x="783" y="703" width="1" height="1"/><rect x="786" y="703" width="1" height="1"/><rect x="789" y="703" width="1" height="1"/><rect x="792" y="703" width="1" height="1"/><rect x="795" y="703" width="1" height="1"/><rect x="798" y="703" width="1" height="1"/></g></svg>
<!-- BORDERS -->
<div class="abs" style="left:0;top:0;width:1302px;height:1px;background:#707070"></div>
<div class="abs" style="left:0;top:0;width:1px;height:1012px;background:#707070"></div>
<div class="abs" style="left:1301px;top:0;width:1px;height:1012px;background:#707070"></div>
<div class="abs" style="left:0;top:1011px;width:1302px;height:1px;background:#707070"></div>
</div>
</body>
</html>
